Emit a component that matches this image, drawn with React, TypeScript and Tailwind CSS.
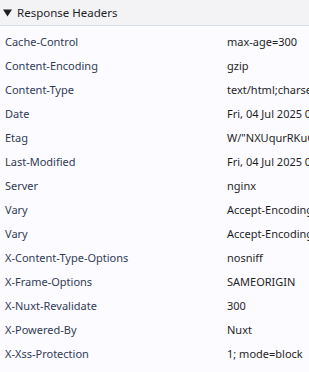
const headers: [string, string][] = [
  ['Cache-Control', 'max-age=300'],
  ['Content-Encoding', 'gzip'],
  ['Content-Type', 'text/html;charset=utf-8'],
  ['Date', 'Fri, 04 Jul 2025 07:12:41 GMT'],
  ['Etag', 'W/"NXUqurRKuGv4e9Fk"'],
  ['Last-Modified', 'Fri, 04 Jul 2025 07:10:02 GMT'],
  ['Server', 'nginx'],
  ['Vary', 'Accept-Encoding'],
  ['Vary', 'Accept-Encoding'],
  ['X-Content-Type-Options', 'nosniff'],
  ['X-Frame-Options', 'SAMEORIGIN'],
  ['X-Nuxt-Revalidate', '300'],
  ['X-Powered-By', 'Nuxt'],
  ['X-Xss-Protection', '1; mode=block'],
];

export default function App() {
  return (
    <div
      className="w-[309px] h-[372px] overflow-hidden bg-[#fcfbff] text-[11px]"
      style={{ fontFamily: '"Segoe UI", "Noto Sans", sans-serif' }}
    >
      <div className="h-[26px] flex items-center pl-[3px] bg-[#f3f3f6] border-b border-[#d6e0ef] text-[11.5px] text-[#1f1f1f]">
        <svg width="9" height="8" viewBox="0 0 9 8" className="mr-[5px] shrink-0">
          <path d="M0 0.5h9L4.5 7.5z" fill="#1f1f1f" />
        </svg>
        <span>Response Headers</span>
      </div>
      <div className="pt-[4px]">
        {headers.map(([k, v], i) => (
          <div key={i} className="h-[24px] flex items-center whitespace-nowrap overflow-hidden">
            <div className="w-[227px] shrink-0 pl-[5px] text-[#303b55]">{k}</div>
            <div className="text-[#1f1f1f]">{v}</div>
          </div>
        ))}
      </div>
    </div>
  );
}
